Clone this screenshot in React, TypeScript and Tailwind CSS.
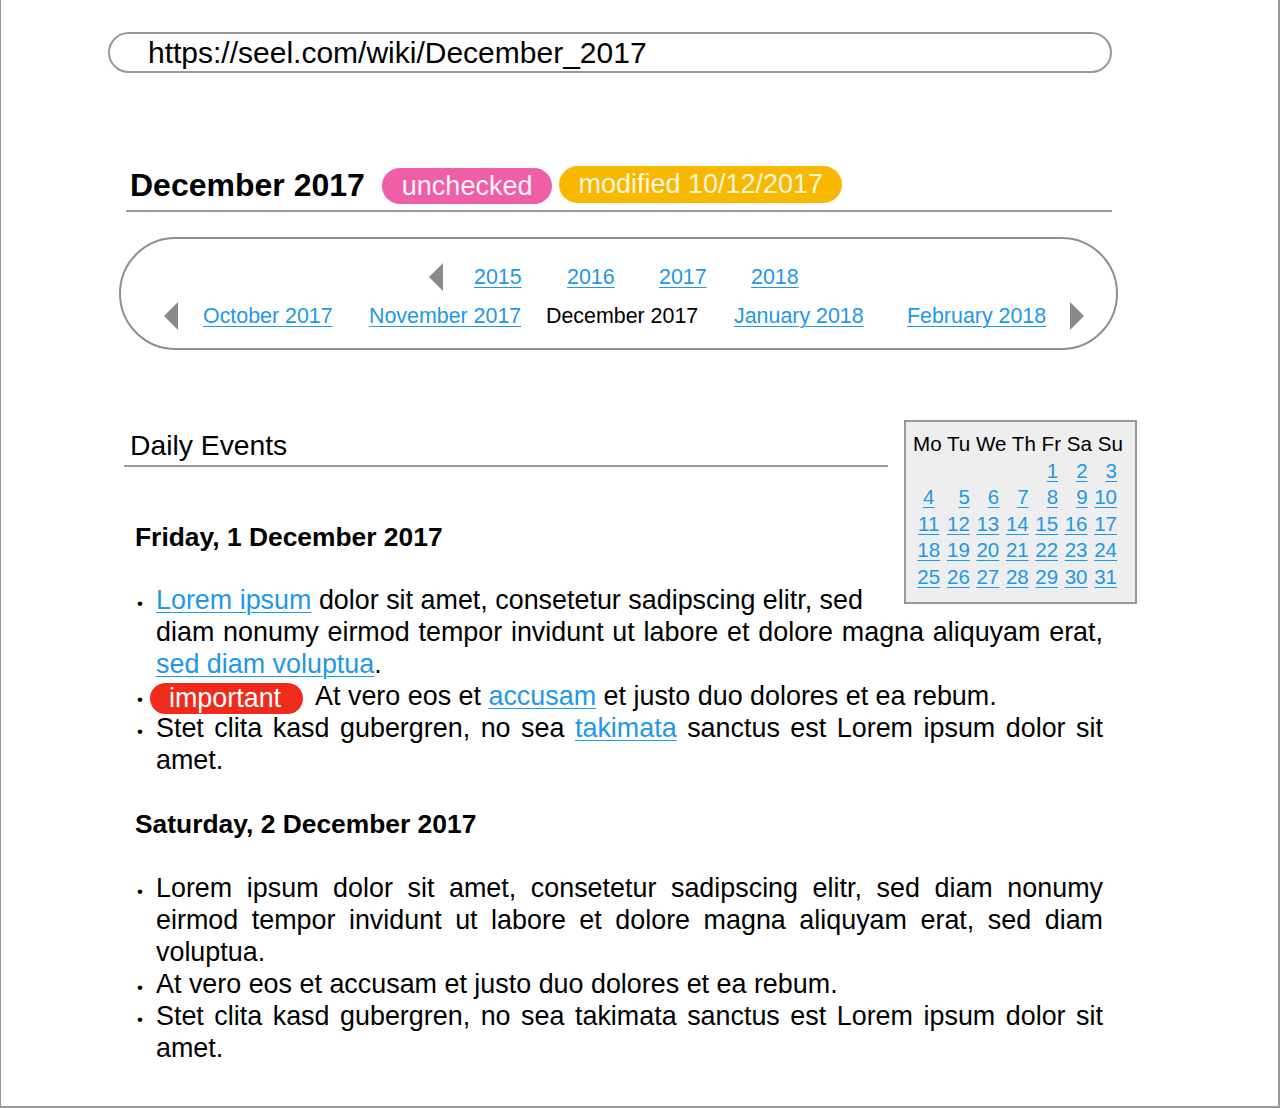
import React from "react";

const LINK = "text-[#1e98e8] underline decoration-1 underline-offset-[3px]";

function TriLeft() {
  return (
    <svg width="15" height="28" viewBox="0 0 15 28" className="block">
      <polygon points="15,0 15,28 1,14" fill="#8a8a8a" />
    </svg>
  );
}
function TriRight() {
  return (
    <svg width="15" height="28" viewBox="0 0 15 28" className="block">
      <polygon points="0,0 0,28 14,14" fill="#8a8a8a" />
    </svg>
  );
}

function Bullet() {
  return (
    <span className="inline-block w-[21px] indent-0 pl-[2px] text-[17px] leading-none">•</span>
  );
}

const weeks: (number | null)[][] = [
  [null, null, null, null, 1, 2, 3],
  [4, 5, 6, 7, 8, 9, 10],
  [11, 12, 13, 14, 15, 16, 17],
  [18, 19, 20, 21, 22, 23, 24],
  [25, 26, 27, 28, 29, 30, 31],
];

function Calendar() {
  return (
    <div className="float-right ml-[16px] -mr-[34px] w-[233px] h-[184px] border-2 border-[#999] bg-[#eeeeee] pt-[9px]">
      <div className="pl-[7px] text-[20.6px] leading-[26.5px] whitespace-nowrap text-black">Mo Tu We Th Fr Sa Su</div>
      <div className="pl-[5px] grid grid-cols-[repeat(7,29.43px)] text-[20.5px] leading-[26.5px]">
        {weeks.flatMap((w, wi) =>
          w.map((d, di) => (
            <div key={`${wi}-${di}`} className={di === 0 ? "pl-[6px] text-center" : "text-right"}>
              {d !== null ? <a className={LINK}>{d}</a> : null}
            </div>
          ))
        )}
      </div>
    </div>
  );
}

export default function App() {
  return (
    <div className="w-[1280px] h-[1108px] border-l border-r-2 border-b-2 border-[#999] bg-white text-black font-['Liberation_Sans',Arial,sans-serif] overflow-hidden">
      {/* URL bar */}
      <div className="ml-[107px] mt-[32px] w-[1004px] h-[41px] border-2 border-[#999] rounded-full flex items-center pl-[38px] text-[30px] whitespace-nowrap">
        https://seel.com/wiki/December_2017
      </div>

      {/* Title */}
      <div className="ml-[125px] mt-[92px] w-[986px] pb-[5px] border-b-2 border-[#999]">
        <div className="h-[40px] flex items-center pl-[4px] whitespace-nowrap">
          <span className="text-[32px] font-bold leading-[40px]">December 2017</span>
          <span className="ml-[17px] h-[36px] mt-[2px] rounded-full bg-[#ee5fa8] px-[20px] flex items-center text-[27px] text-[#fff2f8]">unchecked</span>
          <span className="ml-[7px] h-[37px] -mt-[1px] rounded-full bg-[#f9b800] px-[19px] flex items-center text-[27px] text-[#fff6dc]">modified 10/12/2017</span>
        </div>
      </div>

      {/* Navigation box */}
      <div className="ml-[118px] mt-[25px] w-[999px] h-[113px] border-2 border-[#8e8e8e] rounded-[57px] pt-[24px] text-[21.4px] whitespace-nowrap">
        <div className="h-[28px] flex items-center pl-[307px]">
          <span className="w-[46px]"><TriLeft /></span>
          <span className="w-[93px]"><a className={LINK}>2015</a></span>
          <span className="w-[92px]"><a className={LINK}>2016</a></span>
          <span className="w-[92px]"><a className={LINK}>2017</a></span>
          <span><a className={LINK}>2018</a></span>
        </div>
        <div className="h-[28px] mt-[11px] flex items-center pl-[42px]">
          <span className="w-[40px]"><TriLeft /></span>
          <span className="w-[166px]"><a className={LINK}>October 2017</a></span>
          <span className="w-[177px]"><a className={LINK}>November 2017</a></span>
          <span className="w-[188px]">December 2017</span>
          <span className="w-[173px]"><a className={LINK}>January 2018</a></span>
          <span className="w-[163px]"><a className={LINK}>February 2018</a></span>
          <span><TriRight /></span>
        </div>
      </div>

      {/* Daily events */}
      <div className="flow-root ml-[123px] mt-[70px] w-[979px]">
        <Calendar />
        <h2 className="overflow-hidden mt-[8px] pl-[6px] pb-[3px] text-[28.3px] leading-[34px] border-b-2 border-[#999]">Daily Events</h2>

        <h3 className="mt-[54px] pl-[11px] text-[26.4px] font-bold leading-[32px]">Friday, 1 December 2017</h3>
        <ul className="mt-[31px] pl-[32px] text-[26.9px] leading-[32px] text-justify">
          <li className="indent-[-21px]">
            <Bullet />
            <a className={LINK}>Lorem ipsum</a> dolor sit amet, consetetur sadipscing elitr, sed<br />diam nonumy eirmod tempor invidunt ut labore et dolore magna aliquyam erat, <a className={LINK}>sed diam voluptua</a>.
          </li>
          <li className="indent-[-21px]">
            <Bullet />
            <span className="relative top-[2px] inline-block indent-0 -ml-[6px] mr-[6px] h-[31px] leading-[31px] rounded-full bg-[#ee2b1c] pl-[19px] pr-[22px] text-white">important</span> At vero eos et <a className={LINK}>accusam</a> et justo duo dolores et ea rebum.
          </li>
          <li className="indent-[-21px]">
            <Bullet />
            Stet clita kasd gubergren, no sea <a className={LINK}>takimata</a> sanctus est Lorem ipsum dolor sit amet.
          </li>
        </ul>

        <h3 className="mt-[32px] pl-[11px] text-[26.4px] font-bold leading-[32px]">Saturday, 2 December 2017</h3>
        <ul className="mt-[32px] pl-[32px] text-[26.9px] leading-[32px] text-justify">
          <li className="indent-[-21px]">
            <Bullet />
            Lorem ipsum dolor sit amet, consetetur sadipscing elitr, sed diam nonumy eirmod tempor invidunt ut labore et dolore magna aliquyam erat, sed diam voluptua.
          </li>
          <li className="indent-[-21px]">
            <Bullet />
            At vero eos et accusam et justo duo dolores et ea rebum.
          </li>
          <li className="indent-[-21px]">
            <Bullet />
            Stet clita kasd gubergren, no sea takimata sanctus est Lorem ipsum dolor sit amet.
          </li>
        </ul>
      </div>
    </div>
  );
}
